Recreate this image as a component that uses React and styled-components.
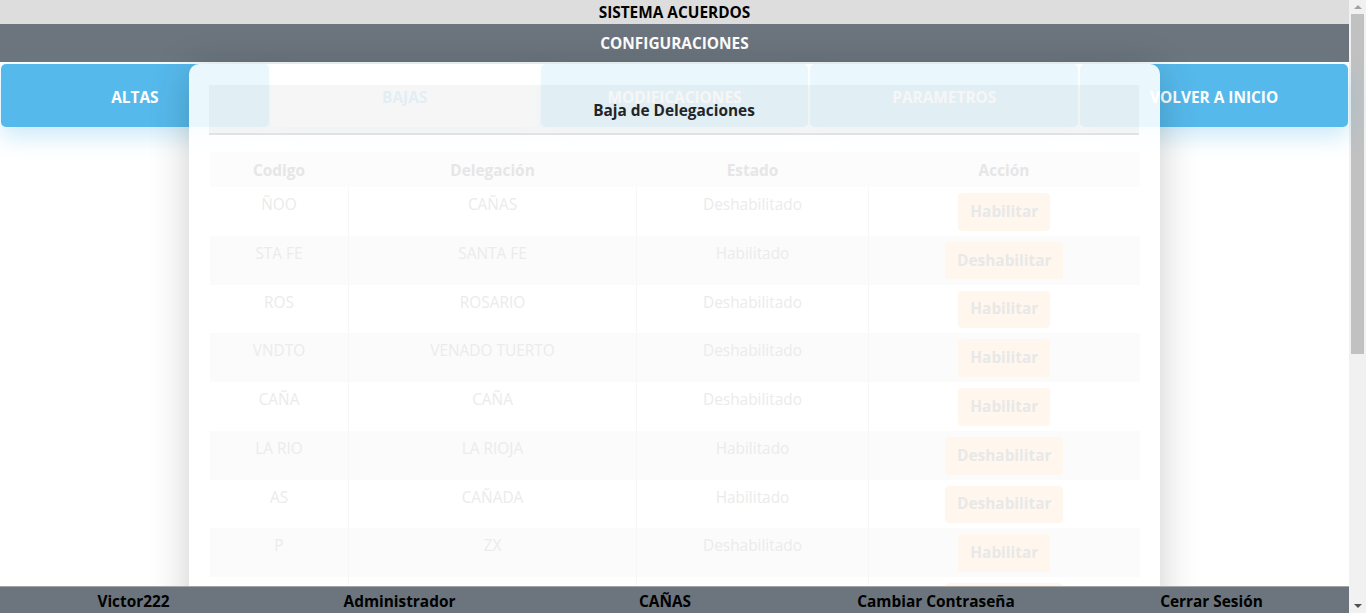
import React from "react";
import styled, { createGlobalStyle } from "styled-components";

const GlobalStyle = createGlobalStyle`
  html, body { margin: 0; padding: 0; }
  body {
    font-family: "Open Sans", "Noto Sans", sans-serif;
    font-size: 15.4px;
    background: #ffffff;
    color: #212529;
    overflow: hidden;
  }
`;

const Page = styled.div`
  display: flex;
  align-items: flex-start;
  width: 100%;
`;

const Main = styled.main`
  position: relative;
  flex: 1;
  min-width: 0;
  height: 100vh;
`;

const TopBar = styled.header`
  height: 24px;
  background: #dddddd;
  display: flex;
  align-items: center;
  justify-content: center;
  font-weight: 700;
  color: #000;
`;

const SectionBar = styled.div`
  height: 38px;
  background: #6c757d;
  display: flex;
  align-items: center;
  justify-content: center;
  font-weight: 700;
  color: #fff;
`;

const Nav = styled.nav`
  display: grid;
  grid-template-columns: repeat(5, 1fr);
  gap: 2px;
  padding: 2px 1px 0;
`;

const Tab = styled.div`
  height: 63px;
  box-sizing: border-box;
  padding-top: 3px;
  border-radius: 5px;
  display: flex;
  align-items: center;
  justify-content: center;
  font-weight: 700;
  background: ${(p) => (p.$active ? "#ffffff" : "#56b9eb")};
  color: ${(p) => (p.$active ? "#56b9eb" : "#ffffff")};
  box-shadow: 0 10px 22px rgba(86, 185, 235, 0.3);
`;

const Modal = styled.section`
  position: absolute;
  top: 64px;
  left: 50%;
  margin-left: -485.5px;
  width: 971px;
  box-sizing: border-box;
  padding: 21px 21px 20px 20px;
  background: rgba(255, 255, 255, 0.88);
  border-radius: 10px;
  box-shadow: 0 6px 40px rgba(0, 0, 0, 0.2);
`;

const ModalHeader = styled.div`
  background: rgba(0, 0, 0, 0.035);
  padding: 14px 0 10px;
  border-bottom: 2px solid #e0e2e4;
  text-align: center;
  font-weight: 700;
  line-height: 24px;
  color: #212529;
`;

const Table = styled.table`
  margin-top: 17px;
  width: 930px;
  border-collapse: collapse;
  table-layout: fixed;
  line-height: 24px;
  text-align: center;
`;

const Th = styled.th`
  height: 35px;
  box-sizing: border-box;
  padding: 2px 8px 0;
  font-weight: 700;
  color: #e6e6e6;
  background: #fcfcfc;
  vertical-align: middle;
`;

const Row = styled.tr`
  background: ${(p) => (p.$striped ? "#fbfbfb" : "transparent")};
`;

const Td = styled.td`
  padding: 6px 8px 5.2px;
  vertical-align: top;
  color: #ebebeb;
  border-left: 1px solid ${(p) => (p.$first ? "transparent" : "#f7f7f7")};
`;

const ActionButton = styled.span`
  display: inline-block;
  padding: 6.8px 12px;
  border-radius: 4px;
  background: #fff7ee;
  color: #e8e8e8;
  font-weight: 700;
`;

const Footer = styled.footer`
  position: fixed;
  left: 0;
  right: 17px;
  bottom: 0;
  height: 27px;
  box-sizing: border-box;
  padding-top: 3px;
  border-top: 1px solid #a5a5a5;
  background: #6c757d;
  display: grid;
  grid-template-columns: 267fr 265fr 266fr 276fr 275fr;
  align-items: center;
  z-index: 10;
`;

const FooterItem = styled.div`
  text-align: center;
  font-weight: 700;
  color: #000;
`;

const ScrollRail = styled.div`
  flex: 0 0 17px;
  height: 100vh;
  background: #f1f1f1;
  display: flex;
  flex-direction: column;
`;

const ScrollArrow = styled.div`
  height: 14px;
  display: flex;
  align-items: center;
  justify-content: center;
  &::before {
    content: "";
    width: 0;
    height: 0;
    border-left: 4px solid transparent;
    border-right: 4px solid transparent;
    ${(p) =>
      p.$down
        ? "border-top: 4px solid #505050;"
        : "border-bottom: 4px solid #a3a3a3;"}
  }
`;

const ScrollTrack = styled.div`
  flex: 1;
  padding: 0 2px;
`;

const ScrollThumb = styled.div`
  height: 340px;
  background: #c1c1c1;
`;

const tabs = ["ALTAS", "BAJAS", "MODIFICACIONES", "PARAMETROS", "VOLVER A INICIO"];

const rows = [
  ["ÑOO", "CAÑAS", "Deshabilitado"],
  ["STA FE", "SANTA FE", "Habilitado"],
  ["ROS", "ROSARIO", "Deshabilitado"],
  ["VNDTO", "VENADO TUERTO", "Deshabilitado"],
  ["CAÑA", "CAÑA", "Deshabilitado"],
  ["LA RIO", "LA RIOJA", "Habilitado"],
  ["AS", "CAÑADA", "Habilitado"],
  ["P", "ZX", "Deshabilitado"],
  ["RAF", "RAFAELA", "Habilitado"],
];

const footerItems = ["Victor222", "Administrador", "CAÑAS", "Cambiar Contraseña", "Cerrar Sesión"];

export default function App() {
  return (
    <Page>
      <GlobalStyle />
      <Main>
        <TopBar>SISTEMA ACUERDOS</TopBar>
        <SectionBar>CONFIGURACIONES</SectionBar>
        <Nav>
          {tabs.map((t) => (
            <Tab key={t} $active={t === "BAJAS"}>
              {t}
            </Tab>
          ))}
        </Nav>
        <Modal>
          <ModalHeader>Baja de Delegaciones</ModalHeader>
          <Table>
            <colgroup>
              <col style={{ width: 139 }} />
              <col style={{ width: 288 }} />
              <col style={{ width: 232 }} />
              <col style={{ width: 271 }} />
            </colgroup>
            <thead>
              <tr>
                <Th>Codigo</Th>
                <Th>Delegación</Th>
                <Th>Estado</Th>
                <Th>Acción</Th>
              </tr>
            </thead>
            <tbody>
              {rows.map(([code, name, state], i) => (
                <Row key={code} $striped={i % 2 === 1}>
                  <Td $first>{code}</Td>
                  <Td>{name}</Td>
                  <Td>{state}</Td>
                  <Td>
                    <ActionButton>
                      {state === "Habilitado" ? "Deshabilitar" : "Habilitar"}
                    </ActionButton>
                  </Td>
                </Row>
              ))}
            </tbody>
          </Table>
        </Modal>
        <Footer>
          {footerItems.map((f) => (
            <FooterItem key={f}>{f}</FooterItem>
          ))}
        </Footer>
      </Main>
      <ScrollRail>
        <ScrollArrow />
        <ScrollTrack>
          <ScrollThumb />
        </ScrollTrack>
        <ScrollArrow $down />
      </ScrollRail>
    </Page>
  );
}
